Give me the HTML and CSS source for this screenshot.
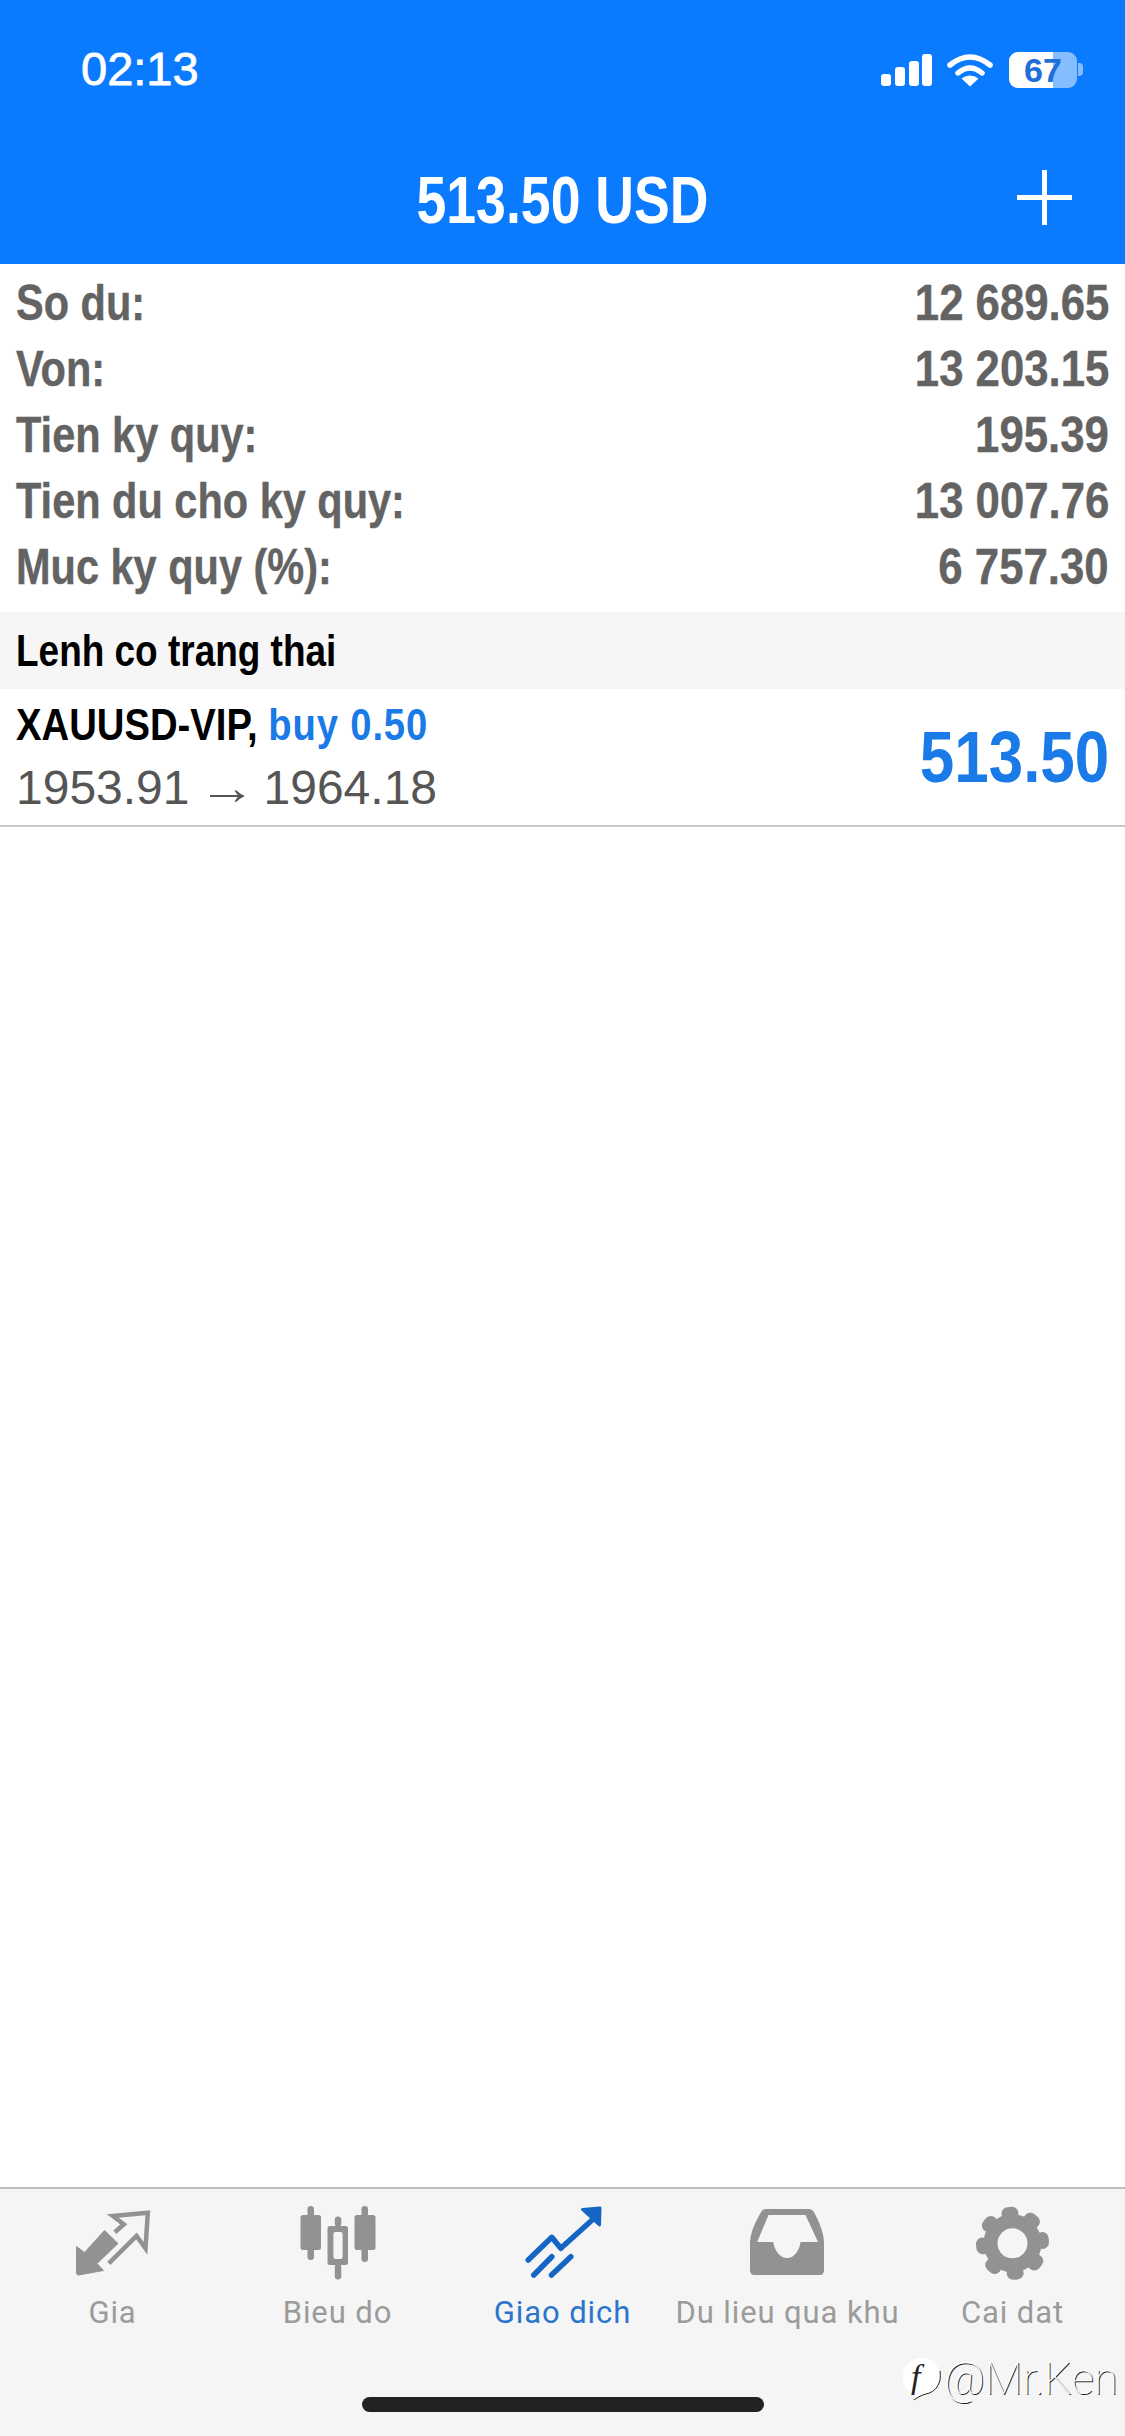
FILE: index.html
```html
<!DOCTYPE html>
<html lang="en">

<head>
  <meta charset="UTF-8">
  <meta name="viewport" content="width=device-width, initial-scale=1.0">
  <title>Giao dich</title>
  <link rel="stylesheet" href="styles.css">
</head>

<body>
  <div class="page">
    <header class="header">
      <div class="status">
        <span class="time">02:13</span>
        <div class="statusIcons">
          <svg class="signal" width="51" height="32" viewBox="0 0 51 32" fill="#fff">
            <rect x="0" y="20" width="10" height="12" rx="3" />
            <rect x="14" y="13" width="10" height="19" rx="3" />
            <rect x="28" y="7" width="10" height="25" rx="3" />
            <rect x="41" y="0" width="10" height="32" rx="3" />
          </svg>
          <svg class="wifi" width="46" height="34" viewBox="0 0 46 34">
            <path d="M3 12 Q23 -4 43 12" fill="none" stroke="#fff" stroke-width="5.5" stroke-linecap="round" />
            <path d="M11 20 Q23 10 35 20" fill="none" stroke="#fff" stroke-width="5.5" stroke-linecap="round" />
            <path d="M23 33.5 L14.5 25.5 Q23 19.5 31.5 25.5 Z" fill="#fff" />
          </svg>
          <div class="battery">
            <div class="batteryBody">
              <div class="batteryFill"></div>
              <span class="batteryText">67</span>
            </div>
            <div class="batteryNub"></div>
          </div>
        </div>
      </div>
      <div class="navbar">
        <span></span>
        <h1 class="title">513.50 USD</h1>
        <svg class="plus" width="55" height="55" viewBox="0 0 55 55" stroke="#fff" stroke-width="5">
          <path d="M27.5 0 V55 M0 27.5 H55" />
        </svg>
      </div>
    </header>

    <main class="main">
      <section class="summary">
        <div class="row"><span class="label">So du:</span><span class="value">12 689.65</span></div>
        <div class="row"><span class="label">Von:</span><span class="value">13 203.15</span></div>
        <div class="row"><span class="label">Tien ky quy:</span><span class="value">195.39</span></div>
        <div class="row"><span class="label">Tien du cho ky quy:</span><span class="value">13 007.76</span></div>
        <div class="row"><span class="label">Muc ky quy (%):</span><span class="value">6 757.30</span></div>
      </section>
      <div class="sectionTitle"><span class="sectionText">Lenh co trang thai</span></div>
      <div class="order">
        <div class="orderInfo">
          <div class="orderName"><span class="orderNameText">XAUUSD-VIP, <span class="orderType">buy 0.50</span></span></div>
          <div class="orderPrices"><span>1953.91</span><span class="arrow">→</span><span>1964.18</span></div>
        </div>
        <div class="orderProfit">513.50</div>
      </div>
    </main>

    <footer class="tabbar">
      <nav class="tabs">
        <div class="tab">
          <svg class="tabIcon" viewBox="2.5 0 100 90">
            <path d="M16 46.5 L24 52.5 L44 30.5 L57.5 43.5 L36.5 63.5 L43 70.5 L18 75 Q16 75 16 73 Z" fill="#929292" stroke="#929292" stroke-width="1" stroke-linejoin="round" />
            <path d="M48.3 63.3 L76 36 L85 48.3 L87.3 12.7 L52.3 16 L63.3 24.3 L54.3 32.3" fill="none" stroke="#929292" stroke-width="4.5" />
          </svg>
          <span>Gia</span>
        </div>
        <div class="tab">
          <svg class="tabIcon" viewBox="0 0 100 90" fill="#929292">
            <rect x="19.5" y="6" width="6.5" height="54" rx="3.2" />
            <rect x="12.5" y="15" width="20.5" height="35" rx="2.5" />
            <rect x="73.5" y="6" width="6.5" height="56" rx="3.2" />
            <rect x="66.5" y="15" width="21" height="35" rx="2.5" />
            <rect x="46.8" y="16.5" width="6.5" height="10" rx="3.2" />
            <rect x="46.8" y="64" width="6.5" height="15.5" rx="3.2" />
            <path fill-rule="evenodd" d="M42 26 H57.5 Q60 26 60 28.5 V62.5 Q60 65 57.5 65 H42 Q39.5 65 39.5 62.5 V28.5 Q39.5 26 42 26 Z M47.5 32 Q45.4 32 45.4 34 V57 Q45.4 59 47.5 59 H52.5 Q54.6 59 54.6 57 V34 Q54.6 32 52.5 32 Z" />
          </svg>
          <span>Bieu do</span>
        </div>
        <div class="tab tabActive">
          <svg class="tabIcon" viewBox="0.5 0 100 90">
            <g fill="none" stroke="#1565c4" stroke-width="5.5" stroke-linecap="round" stroke-linejoin="round">
              <path d="M15.7 60 L39.3 37.3 L48.3 48.3 L83 17" />
              <path d="M21.3 75 L39.3 56.7" />
              <path d="M39 75 L58.3 56.7" />
            </g>
            <path d="M70 9.5 L87.5 8 L87 25 Z" fill="#1565c4" stroke="#1565c4" stroke-width="3" stroke-linejoin="round" />
          </svg>
          <span>Giao dich</span>
        </div>
        <div class="tab">
          <svg class="tabIcon" viewBox="-2.5 0 100 90">
            <path fill="#929292" fill-rule="evenodd" d="M25 9 H68 Q72 9 74 13 Q83 30 83.5 42 V70 Q83.5 75 79 75 H14 Q9.5 75 9.5 70 V42 Q10 30 20 13 Q22 9 25 9 Z M28 15 H65 L77.5 42 H60 C59 50 54 58 46.7 58 C39 58 34 50 32.7 42 H16.7 Z" />
          </svg>
          <span>Du lieu qua khu</span>
        </div>
        <div class="tab">
          <svg class="tabIcon" viewBox="0.5 0 100 90">
            <circle cx="50" cy="43.3" r="22" fill="none" stroke="#929292" stroke-width="14" />
            <circle cx="50" cy="43.3" r="30" fill="none" stroke="#929292" stroke-width="13" stroke-linecap="round" stroke-dasharray="4 19.56" transform="rotate(-9 50 43.3)" />
          </svg>
          <span>Cai dat</span>
        </div>
      </nav>
      <div class="homeBar"></div>
      <div class="watermark">
        <svg class="watermarkLogo" width="40" height="44" viewBox="0 0 40 44">
          <path d="M19 1 C31 1 38 9 38 20 C38 29 33 35 24 37 C20 38 16 40 12 43 C14 40 14 38 13 37 C5 35 1 29 1 20 C1 9 8 1 19 1 Z" fill="#fff" />
          <path d="M38 14 C40 26 34 35 24 37 C20 38 16 40 12 43" fill="none" stroke="#222" stroke-width="1" />
          <text x="9" y="31" class="watermarkF">f</text>
        </svg>
        <span class="watermarkText">@Mr.Ken</span>
      </div>
    </footer>
  </div>
</body>

</html>
```

FILE: styles.css
```css
html,
body {
  margin: 0;
  padding: 0;
  background-color: white;
  font-family: "Liberation Sans", Arial, sans-serif;
}

* {
  box-sizing: border-box;
}

.page {
  display: flex;
  flex-direction: column;
  width: 1125px;
  height: 2436px;
  overflow: hidden;
}

.header {
  height: 264px;
  background-color: #0a7aff;
  color: white;
}

.status {
  display: flex;
  justify-content: space-between;
  align-items: center;
  height: 139px;
  padding: 0 42px 0 81px;
}

.time {
  margin-bottom: 2px;
  font-size: 47px;
  line-height: 1;
  -webkit-text-stroke: 0.8px white;
}

.statusIcons {
  display: flex;
  align-items: center;
}

.signal {
  margin-right: 15px;
}

.wifi {
  margin-right: 16px;
}

.battery {
  display: flex;
  align-items: center;
}

.batteryBody {
  position: relative;
  display: flex;
  justify-content: center;
  align-items: center;
  width: 68px;
  height: 36px;
  border-radius: 9px;
  background-color: rgba(255, 255, 255, 0.5);
  overflow: hidden;
}

.batteryFill {
  position: absolute;
  left: 0;
  top: 0;
  bottom: 0;
  width: 44px;
  background-color: white;
}

.batteryText {
  position: relative;
  color: #1f6fd8;
  font-size: 34px;
  font-weight: 700;
  line-height: 1;
}

.batteryNub {
  width: 5px;
  height: 13px;
  margin-left: 1px;
  border-radius: 0 4px 4px 0;
  background-color: rgba(255, 255, 255, 0.5);
}

.navbar {
  display: grid;
  grid-template-columns: 1fr auto 1fr;
  align-items: center;
  height: 125px;
  padding: 0 53px 5px;
}

.title {
  margin: 0;
  font-size: 67px;
  font-weight: 700;
  line-height: 1;
  white-space: nowrap;
  transform: scaleX(0.8);
}

.plus {
  justify-self: end;
  margin-bottom: 4px;
}

.main {
  flex: 1;
}

.summary {
  padding: 6px 16px 12px;
}

.row {
  display: flex;
  justify-content: space-between;
  align-items: center;
  height: 66px;
  color: #636363;
  font-size: 50px;
  font-weight: 700;
  -webkit-text-stroke: 0.4px #636363;
}

.label {
  display: inline-block;
  transform: scaleX(0.83);
  transform-origin: left center;
}

.value {
  display: inline-block;
  transform: scaleX(0.875);
  transform-origin: right center;
}

.sectionTitle {
  display: flex;
  align-items: center;
  height: 77px;
  padding: 0 16px;
  background-color: #f6f6f6;
  color: black;
  font-size: 44px;
  font-weight: 700;
}

.sectionText {
  display: inline-block;
  transform: scaleX(0.84);
  transform-origin: left center;
}

.order {
  display: flex;
  justify-content: space-between;
  align-items: center;
  height: 138px;
  padding: 0 16px;
  border-bottom: 2px solid #c9c9c9;
}

.orderInfo {
  padding-bottom: 3px;
}

.orderName {
  color: black;
  font-size: 45px;
  font-weight: 700;
  line-height: 63px;
  white-space: nowrap;
}

.orderNameText {
  display: inline-block;
  transform: scaleX(0.85);
  transform-origin: left center;
}

.orderType {
  color: #1a7ae8;
  letter-spacing: 1px;
}

.orderPrices {
  display: flex;
  gap: 13px;
  color: #555;
  font-size: 48px;
  line-height: 63px;
}

.arrow {
  display: inline-block;
  transform: scaleX(1.2);
}

.orderProfit {
  color: #1a7ae8;
  font-size: 72px;
  font-weight: 700;
  transform: scaleX(0.86);
  transform-origin: right center;
}

.tabbar {
  position: relative;
  height: 249px;
  background-color: #f5f5f5;
  border-top: 2px solid #bdbdbd;
}

.tabs {
  display: grid;
  grid-template-columns: repeat(5, 1fr);
  padding-top: 11px;
}

.tab {
  display: flex;
  flex-direction: column;
  align-items: center;
  color: #9b9b9b;
  font-family: Roboto, sans-serif;
  font-size: 31px;
  letter-spacing: 0.9px;
  line-height: 34px;
}

.tab span {
  margin-top: 6px;
  white-space: nowrap;
}

.tabActive {
  color: #2a74cc;
}

.tabIcon {
  display: block;
  width: 100px;
  height: 90px;
}

.homeBar {
  width: 402px;
  height: 15px;
  margin: 67px auto 0;
  border-radius: 8px;
  background-color: #222;
}

.watermark {
  position: absolute;
  left: 902px;
  top: 164px;
  display: flex;
  align-items: center;
  gap: 2px;
}

.watermarkF {
  font-family: "Liberation Serif", serif;
  font-size: 34px;
  font-style: italic;
  fill: #222;
}

.watermarkText {
  color: white;
  font-family: Roboto, sans-serif;
  font-size: 44px;
  font-weight: 100;
  text-shadow: 1px 1px 0 #222;
}
```
